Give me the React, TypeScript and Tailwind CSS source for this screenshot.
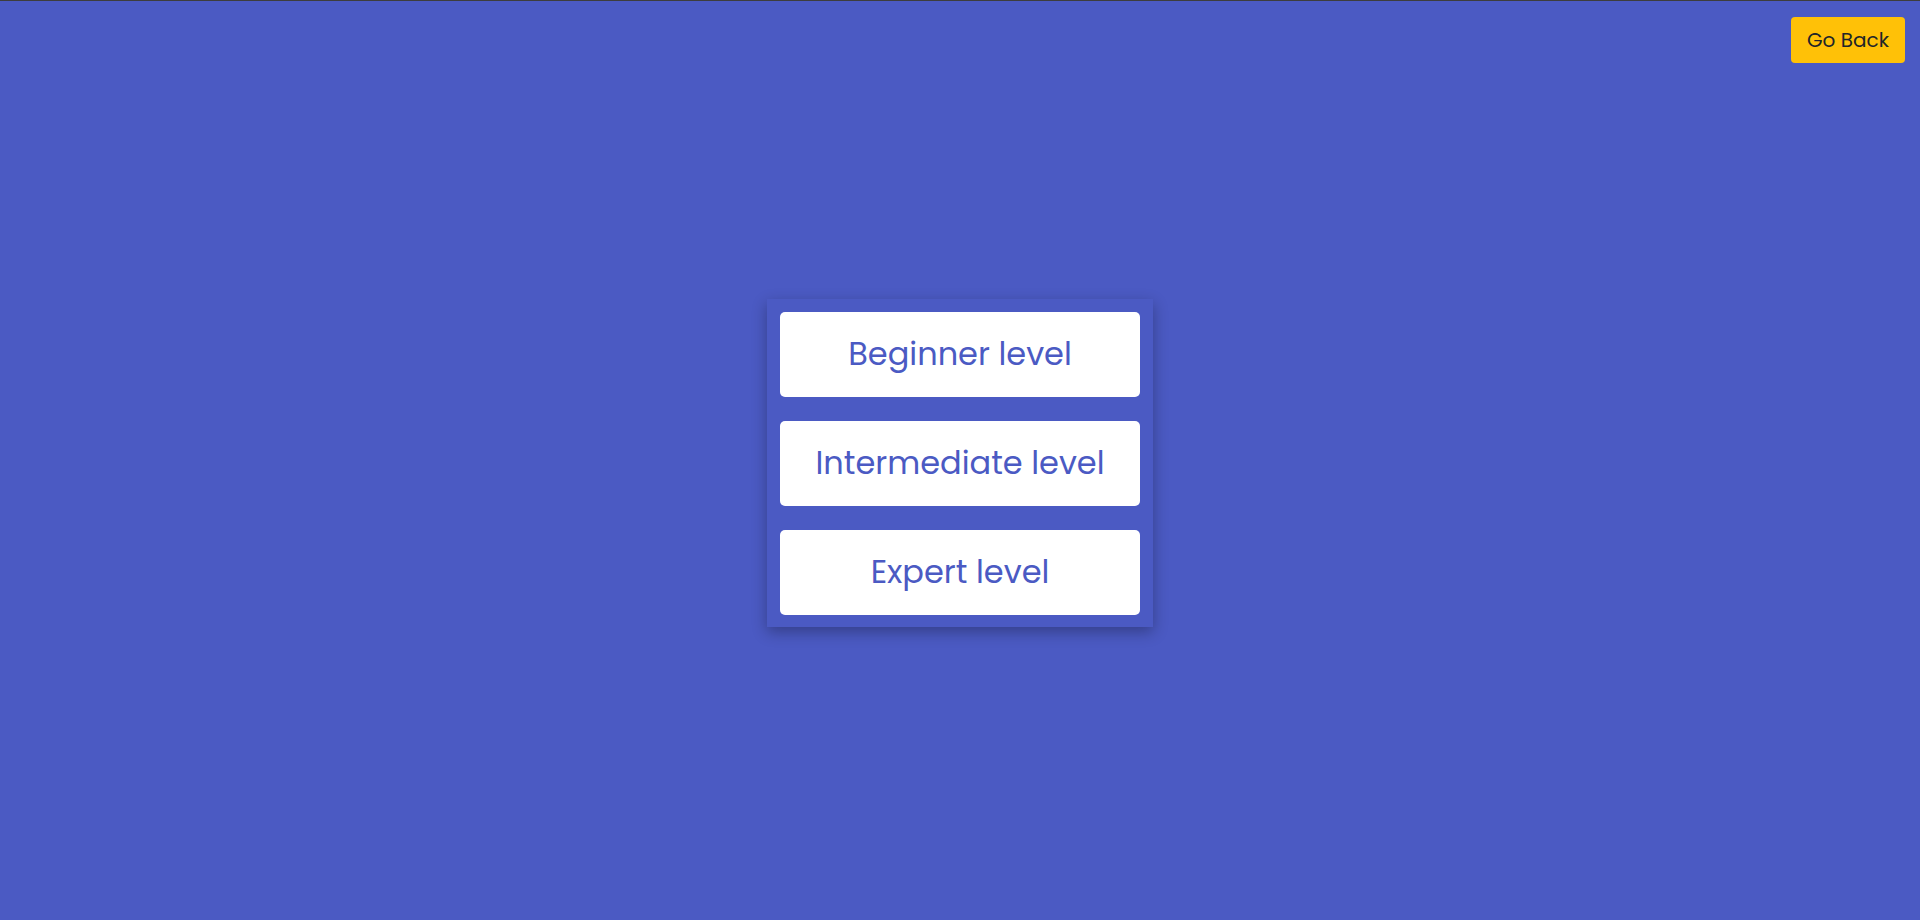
const levels = ['Beginner level', 'Intermediate level', 'Expert level'];

export default function App() {
    return (
        <div
            className="relative h-[920px] w-full overflow-hidden border-t border-[#3d3d3d] bg-[#4b5ac3]"
            style={{ fontFamily: 'Poppins, Inter, "Noto Sans", sans-serif' }}
        >
            <button className="absolute top-[16px] right-[15px] flex h-[46px] w-[114px] items-center justify-center rounded-[4px] bg-[#ffc107] text-[20px] text-[#212529]">
                Go Back
            </button>

            <div className="flex justify-center pt-[298px]">
                <div className="flex w-[386px] flex-col gap-[24px] bg-[#4b5ac3] px-[13px] pt-[13px] pb-[12px] shadow-[0_5px_14px_rgba(0,0,0,0.3)]">
                    {levels.map((level) => (
                        <button
                            key={level}
                            className="flex h-[85px] w-full items-center justify-center rounded-[5px] bg-white pb-[2px] text-[32px] text-[#4b5ac3]"
                        >
                            {level}
                        </button>
                    ))}
                </div>
            </div>
        </div>
    );
}
